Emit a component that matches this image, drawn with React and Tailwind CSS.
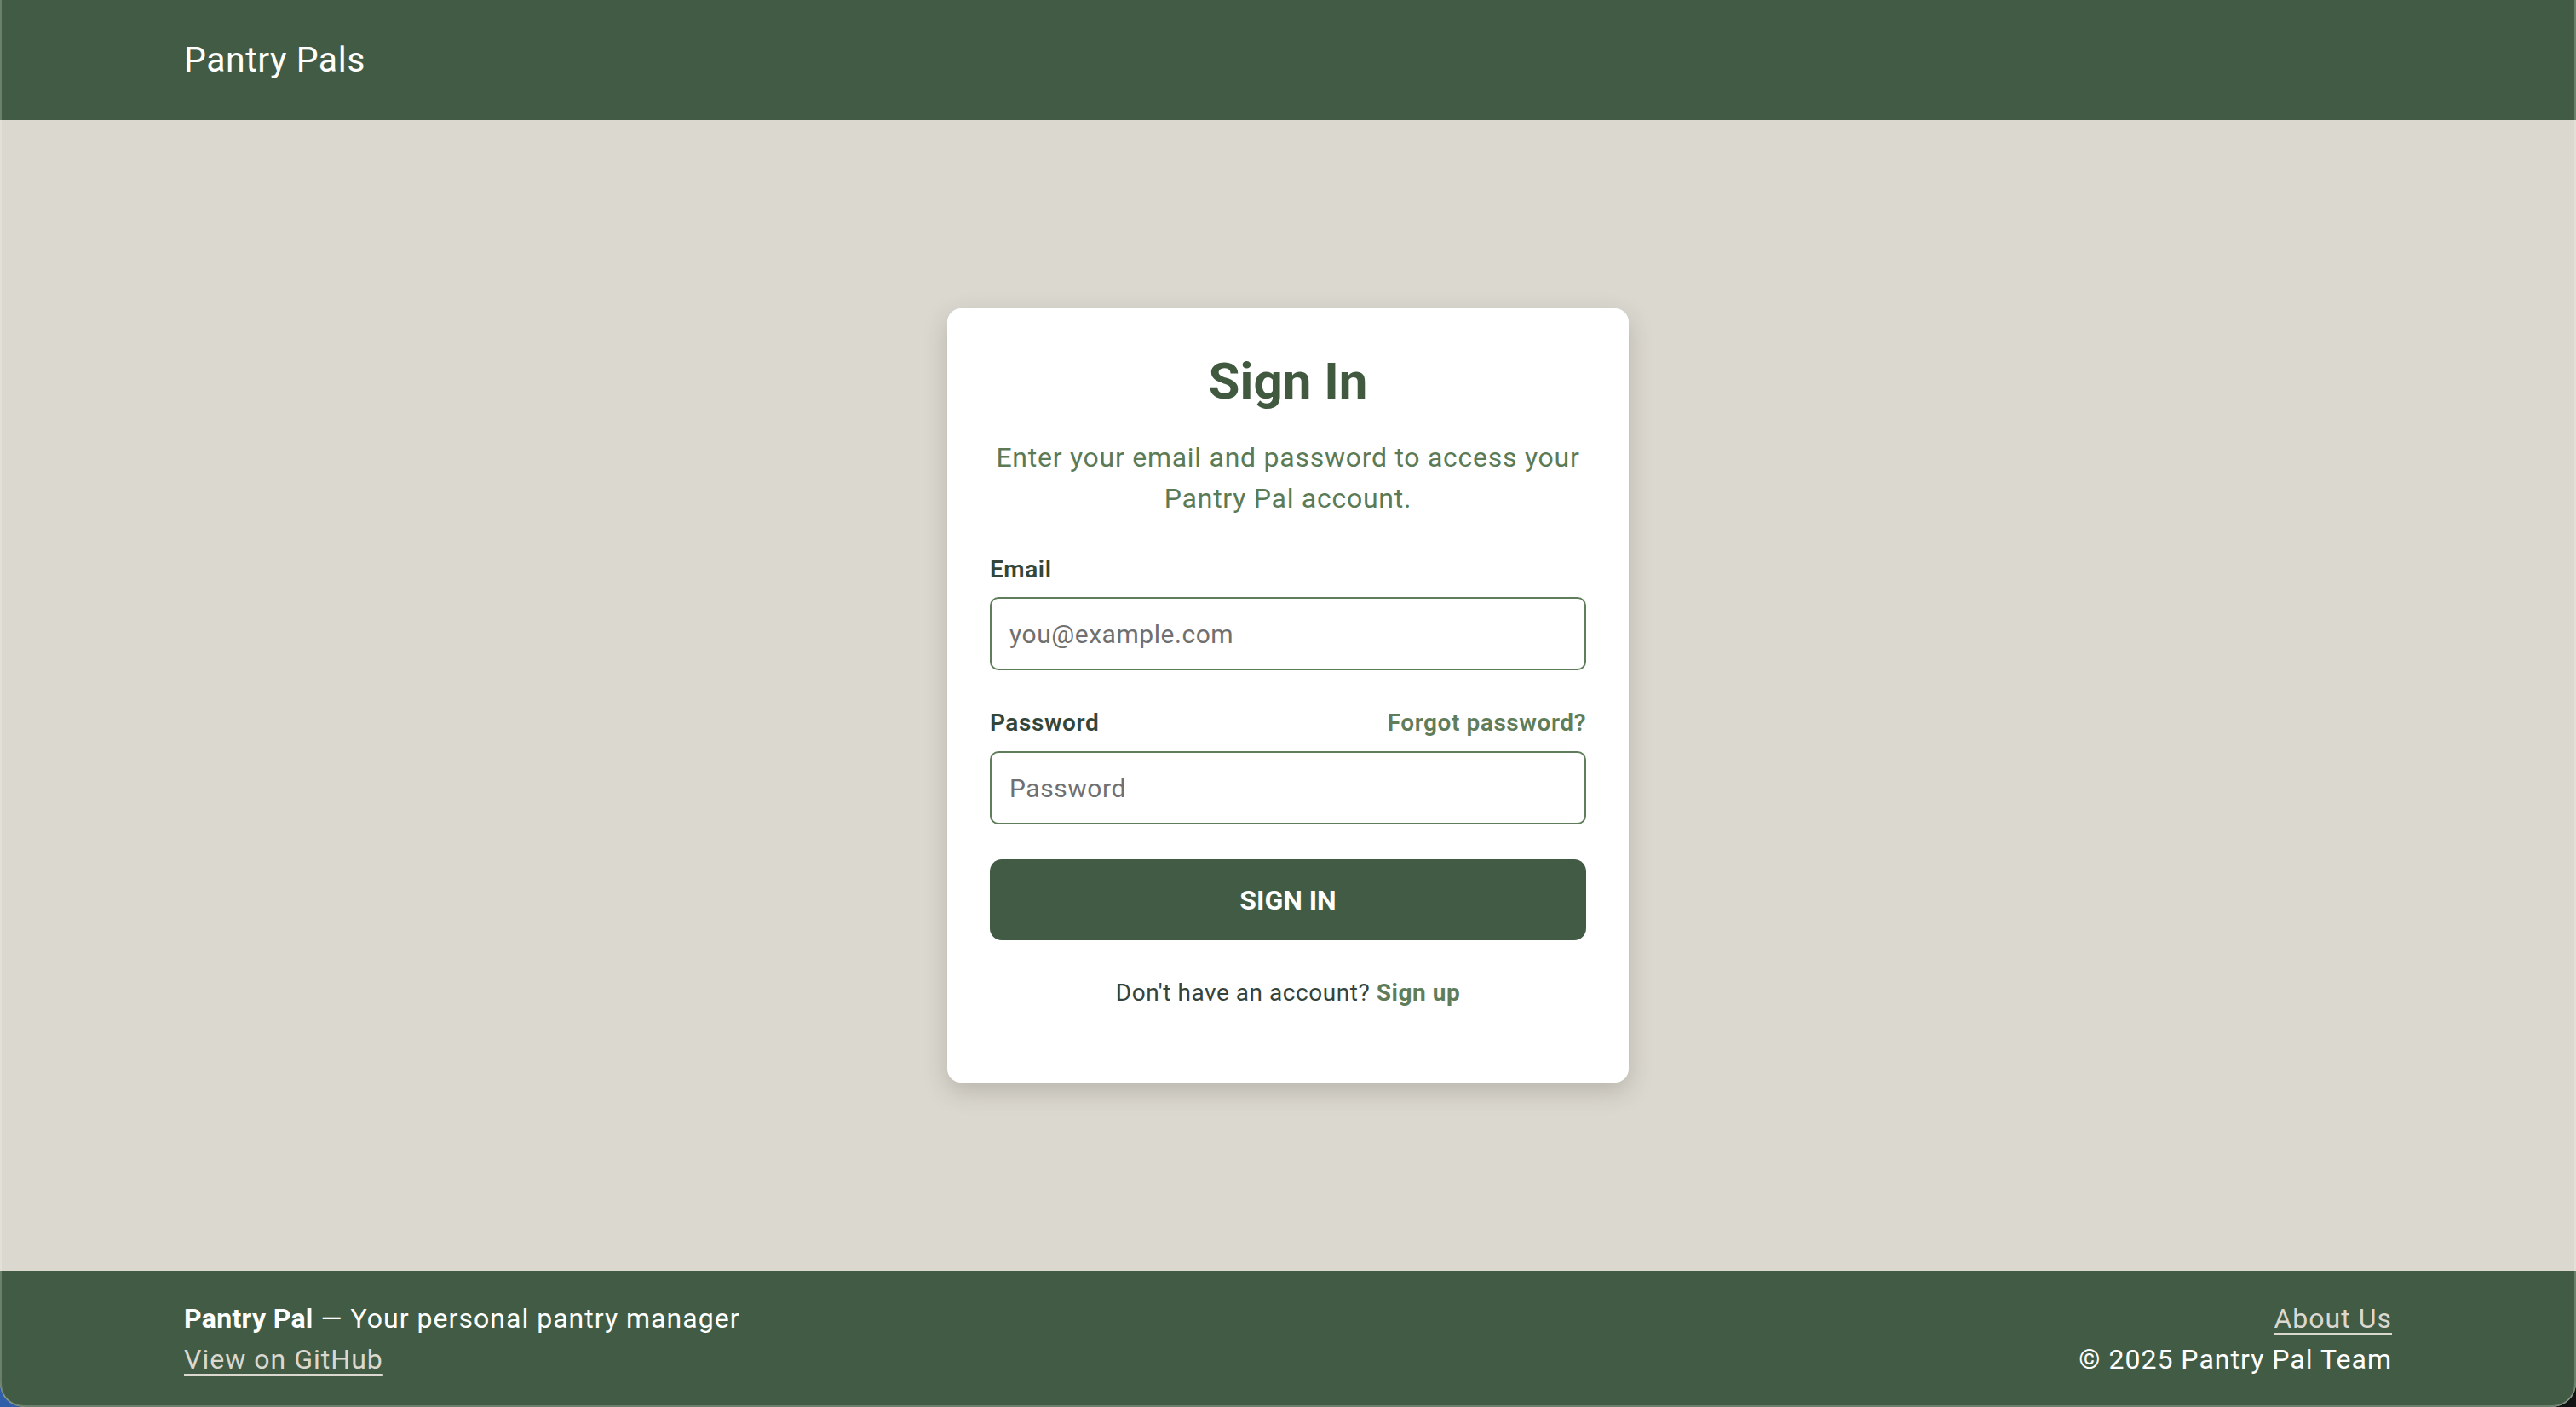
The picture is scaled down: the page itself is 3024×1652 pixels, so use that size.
export default function App() {
  const font = { fontFamily: 'Roboto, "Liberation Sans", sans-serif' };
  return (
    <div className="h-screen w-full bg-[#141414] bg-[radial-gradient(circle_at_0%_100%,#2f5fa8_0px,#2f5fa8_20px,transparent_40px)] tracking-[0.034em]" style={font}>
      <div className="relative flex h-full w-full flex-col overflow-hidden rounded-b-[28px] bg-[#dbd8d0]">
        <header className="flex h-[141px] shrink-0 items-center bg-[#425b44] px-[216px]">
          <span className="text-[41px] font-normal leading-none text-white">Pantry Pals</span>
        </header>

        <main className="flex flex-1 items-center justify-center">
          <div className="w-[800px] rounded-[16px] bg-white px-[50px] pb-[85px] pt-[50px] shadow-[0_10px_28px_rgba(60,55,40,0.22)]">
            <h1 className="text-center text-[60px] font-bold leading-[72px] tracking-normal text-[#41593f]">Sign In</h1>
            <p className="mt-[29px] text-center text-[32px] leading-[48px] tracking-[0.023em] text-[#5b7a56]">
              Enter your email and password to access your Pantry Pal account.
            </p>

            <div className="mt-[40px] flex flex-col">
              <label className="text-[28px] font-semibold leading-[40px] tracking-[0.02em] text-[#34463a]">Email</label>
              <input
                type="email"
                placeholder="you@example.com"
                className="mt-[12px] h-[86px] w-full rounded-[10px] border-2 border-[#5f7d5a] bg-white px-[21px] text-[30px] text-[#34463a] outline-none placeholder:text-[#707070]"
              />
            </div>

            <div className="mt-[42px] flex flex-col">
              <div className="flex items-center justify-between">
                <label className="text-[28px] font-semibold leading-[40px] tracking-[0.02em] text-[#34463a]">Password</label>
                <a href="#" className="text-[28px] font-semibold leading-[40px] tracking-[0.02em] text-[#5f7d5a]">Forgot password?</a>
              </div>
              <input
                type="password"
                placeholder="Password"
                className="mt-[13px] h-[86px] w-full rounded-[10px] border-2 border-[#5f7d5a] bg-white px-[21px] text-[30px] text-[#34463a] outline-none placeholder:text-[#707070]"
              />
            </div>

            <button className="mt-[41px] flex h-[95px] w-full items-center justify-center rounded-[14px] bg-[#425b44] text-[32px] font-bold uppercase tracking-normal text-white">
              Sign In
            </button>

            <p className="mt-[42px] text-center text-[28px] leading-[40px] text-[#34443a]">
              Don't have an account? <a href="#" className="font-bold text-[#5f7d5a]">Sign up</a>
            </p>
          </div>
        </main>

        <footer className="flex h-[160px] shrink-0 items-center justify-between bg-[#425b44] px-[216px] text-[32px] leading-[48px] tracking-[0.032em] text-white">
          <div className="flex flex-col">
            <span>
              <span className="font-bold tracking-[0.01em]">Pantry Pal</span> — Your personal pantry manager
            </span>
            <a href="#" className="self-start text-[#dbd8d0] underline underline-offset-[6px]">View on GitHub</a>
          </div>
          <div className="flex flex-col items-end">
            <a href="#" className="text-[#dbd8d0] underline underline-offset-[6px]">About Us</a>
            <span>© 2025 Pantry Pal Team</span>
          </div>
        </footer>

        <div className="pointer-events-none absolute inset-0 rounded-b-[28px] shadow-[inset_2px_0_0_rgba(255,255,255,0.22),inset_-2px_0_0_rgba(255,255,255,0.22),inset_0_-2px_0_rgba(255,255,255,0.22)]"></div>
      </div>
    </div>
  );
}
